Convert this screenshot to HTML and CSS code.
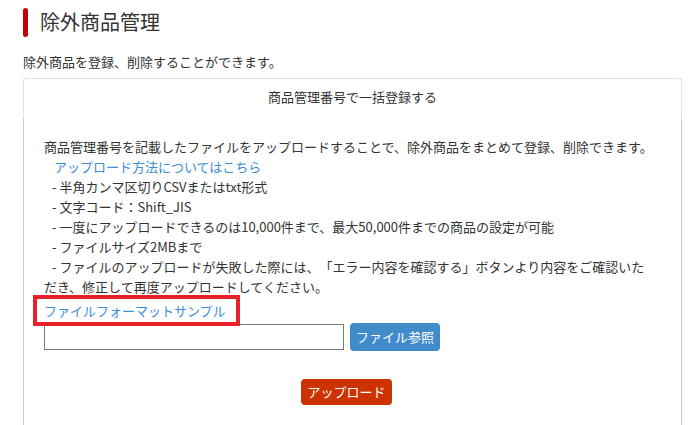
FILE: index.html
```html
<!DOCTYPE html>
<html lang="ja">
<head>
  <meta charset="UTF-8" />
  <meta name="viewport" content="width=device-width, initial-scale=1.0"/>
  <title>除外商品管理</title>
  <link rel="stylesheet" href="styles.css">
</head>
<body>

  <h1 class="page-title">除外商品管理</h1>

  <p class="lead">除外商品を登録、削除することができます。</p>

  <div class="panel">
    <div class="panel-heading">商品管理番号で一括登録する</div>

    <div class="panel-body">
      <p class="line">商品管理番号を記載したファイルをアップロードすることで、除外商品をまとめて登録、削除できます。</p>
      <p class="line howto"><a href="#">アップロード方法についてはこちら</a></p>
      <p class="line item">- 半角カンマ区切りCSVまたはtxt形式</p>
      <p class="line item">- 文字コード：Shift_JIS</p>
      <p class="line item">- 一度にアップロードできるのは10,000件まで、最大50,000件までの商品の設定が可能</p>
      <p class="line item">- ファイルサイズ2MBまで</p>
      <p class="line item">- ファイルのアップロードが失敗した際には、「エラー内容を確認する」ボタンより内容をご確認いただき、修正して再度アップロードしてください。</p>

      <p class="line sample">
        <a href="#" class="sample-link">ファイルフォーマットサンプル<span class="mark"></span></a>
      </p>

      <div class="file-row">
        <input type="text" class="file-name" readonly>
        <button type="button" class="btn btn-browse">ファイル参照</button>
      </div>

      <div class="upload-row">
        <button type="button" class="btn btn-upload">アップロード</button>
      </div>
    </div>
  </div>

</body>
</html>
```

FILE: styles.css
```css
:root {
  --text: #333;
  --link: #3a8ed8;
  --accent: #c40000;
}

body {
  margin: 0;
  padding: 0 8px 0 23px;
  font-family: "Noto Sans CJK JP", "Noto Sans", sans-serif;
  font-size: 13px;
  line-height: 20px;
  color: var(--text);
  background-color: #fff;
  text-spacing-trim: space-all;
}

a {
  color: var(--link);
  text-decoration: none;
}

.page-title {
  display: flex;
  align-items: center;
  gap: 12px;
  margin: 0;
  padding-top: 7px;
  height: 30px;
  font-size: 20px;
  font-weight: normal;
  line-height: 30px;
}

.page-title::before {
  content: "";
  width: 5px;
  height: 29px;
  border-radius: 3px;
  background-color: var(--accent);
}

.lead {
  margin: 15px 0 6px;
}

.panel {
  border: 1px solid #ccc;
  border-top-color: #e2e2e2;
  border-radius: 4px 4px 0 0;
  min-height: 360px;
}

.panel-heading {
  margin: 0 -1px;
  padding: 8px 0 11px;
  border: 1px solid #e2e2e2;
  border-top: none;
  border-bottom: none;
  text-align: center;
  line-height: 20px;
}

.panel-body {
  padding: 19px 24px 0 20px;
}

.line {
  margin: 0;
}

.item {
  text-indent: 8px;
}

.howto {
  text-indent: 10px;
}

.sample {
  margin-top: 4px;
  line-height: 20px;
}

.sample-link {
  position: relative;
  display: inline-block;
}

.mark {
  position: absolute;
  left: -11px;
  right: -14px;
  top: -6px;
  bottom: -5px;
  border: 4px solid #e8202a;
}

.file-row {
  display: flex;
  align-items: center;
  gap: 6px;
  margin-top: 2px;
}

.file-name {
  width: 300px;
  height: 26px;
  margin: 0;
  box-sizing: border-box;
  border: 1px solid #777;
  padding: 2px 4px;
  font: inherit;
}

.btn {
  border: none;
  border-radius: 4px;
  color: #fff;
  font-family: inherit;
  font-size: 13px;
  line-height: 20px;
  cursor: pointer;
}

.btn-browse {
  padding: 4px 6px;
  background-color: #428bca;
}

.btn-upload {
  padding: 3px 6px;
  background-color: #cc3300;
}

.upload-row {
  margin-top: 28px;
  padding-right: 8px;
  text-align: center;
}
```
